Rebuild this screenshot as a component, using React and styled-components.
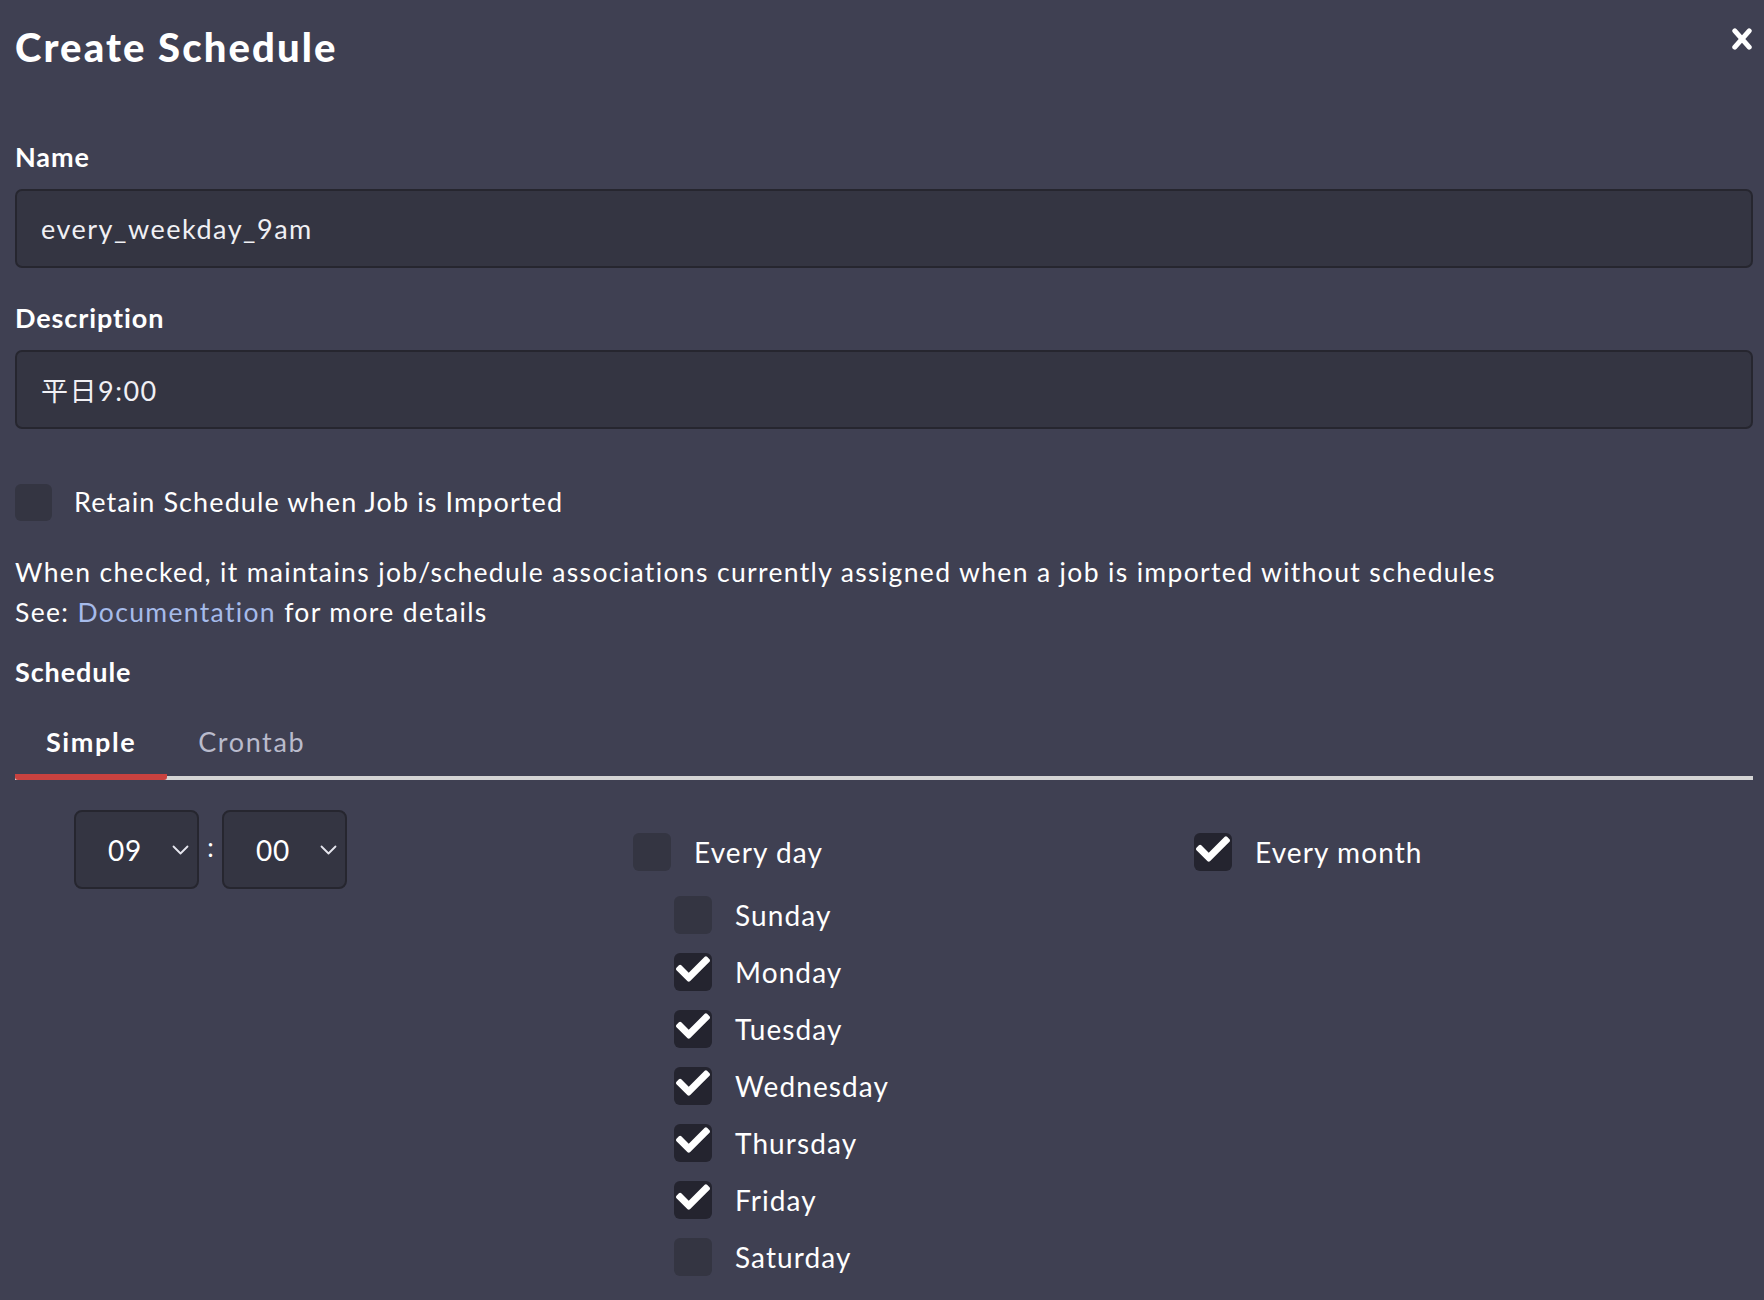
import React from 'react'
import styled, { createGlobalStyle } from 'styled-components'
import { FaCheck } from 'react-icons/fa'

const bg = '#3f4052'
const fieldBg = '#343542'
const fieldBorder = '#26262f'
const checkedBg = '#24242f'
const red = '#c9423f'
const line = '#d4d4d4'
const link = '#a6bbea'

const Global = createGlobalStyle`
  html, body {
    margin: 0;
    background: ${bg};
  }
  body {
    font-family: Lato, "Noto Sans", "Noto Sans CJK JP", sans-serif;
    color: #ffffff;
  }
`

const days = [
  { name: 'Sunday', on: false },
  { name: 'Monday', on: true },
  { name: 'Tuesday', on: true },
  { name: 'Wednesday', on: true },
  { name: 'Thursday', on: true },
  { name: 'Friday', on: true },
  { name: 'Saturday', on: false },
]

function Check({ on, size }) {
  return (
    <Box on={on} size={size}>
      {on && <FaCheck size={34} />}
    </Box>
  )
}

function Select({ value }) {
  return (
    <SelectBox>
      <SelectValue>{value}</SelectValue>
      <svg width="17" height="10" viewBox="0 0 17 10">
        <polyline points="1.5,1.5 8.5,8.5 15.5,1.5" fill="none" stroke="#e6e6ee" strokeWidth="1.8" strokeLinecap="round" strokeLinejoin="round" />
      </svg>
    </SelectBox>
  )
}

export default function App() {
  return (
    <Page>
      <Global />
      <Header>
        <Title>Create Schedule</Title>
        <Close>
          <svg width="20" height="22" viewBox="0 0 20 22">
            <line x1="2.8" y1="2.8" x2="17.2" y2="19.2" stroke="#fff" strokeWidth="5" strokeLinecap="round" />
            <line x1="17.2" y1="2.8" x2="2.8" y2="19.2" stroke="#fff" strokeWidth="5" strokeLinecap="round" />
          </svg>
        </Close>
      </Header>

      <Label first>Name</Label>
      <Field>every_weekday_9am</Field>

      <Label>Description</Label>
      <Field>平日9:00</Field>

      <RetainRow>
        <Check on={false} size={37} />
        <RowText>Retain Schedule when Job is Imported</RowText>
      </RetainRow>

      <Help>
        When checked, it maintains job/schedule associations currently assigned when a job is imported without schedules
        <br />
        See: <DocLink>Documentation</DocLink> for more details
      </Help>

      <SectionLabel>Schedule</SectionLabel>

      <TabBar>
        <Tab active>Simple</Tab>
        <Tab>Crontab</Tab>
      </TabBar>

      <Panel>
        <TimeRow>
          <Select value="09" />
          <Colon>:</Colon>
          <Select value="00" />
        </TimeRow>

        <Column>
          <CheckRow>
            <Check on={false} size={38} />
            <RowText big>Every day</RowText>
          </CheckRow>
          <DayList>
            {days.map(d => (
              <CheckRow key={d.name}>
                <Check on={d.on} size={38} />
                <RowText big>{d.name}</RowText>
              </CheckRow>
            ))}
          </DayList>
        </Column>

        <Column>
          <CheckRow>
            <Check on size={38} />
            <RowText big>Every month</RowText>
          </CheckRow>
        </Column>
      </Panel>
    </Page>
  )
}

const Page = styled.div`
  width: 1764px;
  min-height: 1300px;
  box-sizing: border-box;
  padding: 23px 11px 0 15px;
  background: ${bg};
`

const Header = styled.div`
  display: flex;
  justify-content: space-between;
  align-items: flex-start;
  height: 48px;
`

const Title = styled.h1`
  margin: 0;
  font-family: Lato, sans-serif;
  font-weight: 900;
  font-size: 40px;
  line-height: 48px;
  letter-spacing: 2.1px;
`

const Close = styled.div`
  margin-top: 5px;
  margin-right: 1px;
  line-height: 0;
`

const Label = styled.div`
  margin-top: ${p => (p.first ? '69px' : '33px')};
  font-weight: 700;
  font-size: 27px;
  line-height: 34px;
  letter-spacing: 0.9px;
`

const SectionLabel = styled(Label)`
  margin-top: 23px;
`

const Field = styled.div`
  margin-top: 15px;
  height: 79px;
  box-sizing: border-box;
  display: flex;
  align-items: center;
  padding: 0 24px;
  background: ${fieldBg};
  border: 2px solid ${fieldBorder};
  border-radius: 7px;
  font-size: 27px;
  letter-spacing: 1.5px;
  color: #f0f0f4;
`

const Box = styled.div`
  flex: none;
  width: ${p => p.size}px;
  height: ${p => p.size}px;
  border-radius: 6px;
  background: ${p => (p.on ? checkedBg : fieldBg)};
  color: #fff;
  display: flex;
  align-items: flex-start;
  padding-left: 2px;
  box-sizing: border-box;
  svg {
    margin-top: -1px;
  }
`

const RetainRow = styled.div`
  margin-top: 54px;
  display: flex;
  align-items: center;
  gap: 22px;
`

const RowText = styled.span`
  font-size: ${p => (p.big ? '28px' : '27px')};
  letter-spacing: 1.1px;
  line-height: 38px;
`

const Help = styled.p`
  margin: 32px 0 0;
  font-size: 26.5px;
  letter-spacing: 1.35px;
  line-height: 39.5px;
`

const DocLink = styled.a`
  color: ${link};
  text-decoration: none;
`

const TabBar = styled.div`
  margin-top: 36px;
  display: flex;
  background: linear-gradient(${line}, ${line}) left bottom / 100% 4px no-repeat;
`

const Tab = styled.div`
  padding: 0 31px 15px;
  font-size: 27px;
  line-height: 34px;
  letter-spacing: 1.6px;
  font-weight: ${p => (p.active ? 700 : 400)};
  color: ${p => (p.active ? '#ffffff' : '#b9bbcc')};
  border-bottom: 6px solid ${p => (p.active ? red : 'transparent')};
  border-radius: 3px;
`

const Panel = styled.div`
  margin-top: 30px;
  padding-left: 59px;
  display: grid;
  grid-template-columns: 559px 561px 1fr;
  align-items: start;
`

const TimeRow = styled.div`
  display: flex;
  align-items: center;
`

const SelectBox = styled.div`
  width: 125px;
  height: 79px;
  box-sizing: border-box;
  display: flex;
  align-items: center;
  justify-content: space-between;
  padding: 0 8px 0 32px;
  background: ${fieldBg};
  border: 2px solid ${fieldBorder};
  border-radius: 8px;
`

const SelectValue = styled.span`
  font-size: 28px;
  letter-spacing: 0.8px;
`

const Colon = styled.span`
  width: 23px;
  text-align: center;
  font-size: 26px;
  margin-top: -6px;
`

const Column = styled.div`
  padding-top: 23px;
`

const CheckRow = styled.div`
  display: flex;
  align-items: center;
  gap: 23px;
`

const DayList = styled.div`
  margin-top: 25px;
  padding-left: 41px;
  display: flex;
  flex-direction: column;
  gap: 19px;
`
